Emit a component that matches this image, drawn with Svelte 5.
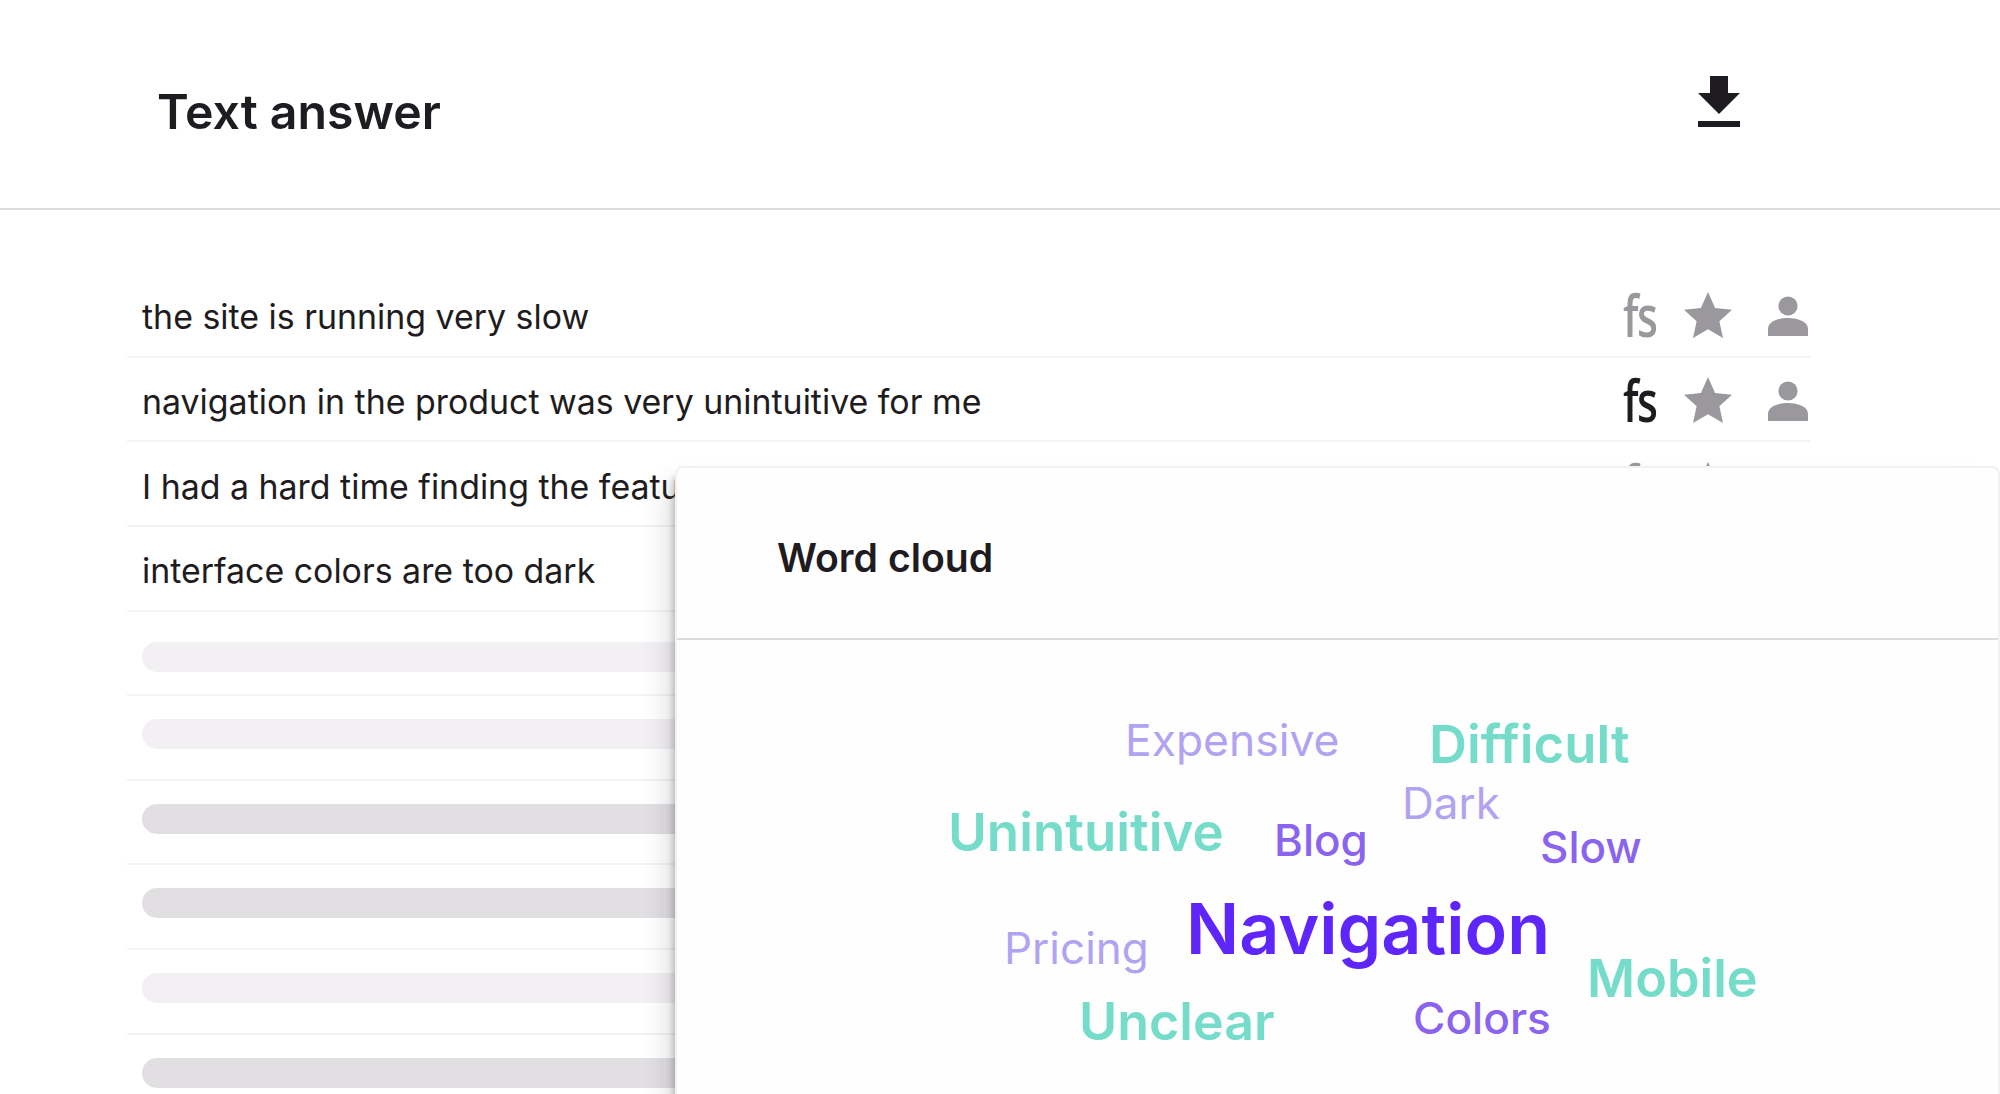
<script>
  const panelX = 675;
  const bodyY = 638;
  const rows = [
    { text: 'the site is running very slow', fs: false },
    { text: 'navigation in the product was very unintuitive for me', fs: true },
    { text: 'I had a hard time finding the features I needed', fs: false },
    { text: 'interface colors are too dark', fs: false }
  ];
  const bars = ['light first', 'light', 'dark', 'dark', 'light', 'dark'];
  const teal = '#75dcc9', pale = '#b1a3f1', mid = '#8a63ee', deep = '#5f26fb';
  const words = [
    { t: 'Expensive', x: 1123, b: 754, s: 44.4, w: 400, c: pale },
    { t: 'Difficult', x: 1427, b: 761, s: 52.6, w: 600, c: teal },
    { t: 'Unintuitive', x: 946, b: 850, s: 52.8, w: 600, c: teal },
    { t: 'Blog', x: 1272, b: 853.5, s: 44, w: 450, c: mid },
    { t: 'Dark', x: 1400, b: 817, s: 44, w: 400, c: pale },
    { t: 'Slow', x: 1538, b: 861, s: 44, w: 450, c: mid },
    { t: 'Navigation', x: 1184, b: 952, s: 70, w: 600, c: deep },
    { t: 'Pricing', x: 1002, b: 962, s: 44, w: 400, c: pale },
    { t: 'Mobile', x: 1585, b: 995, s: 52.2, w: 600, c: teal },
    { t: 'Unclear', x: 1077, b: 1039, s: 52, w: 600, c: teal },
    { t: 'Colors', x: 1411, b: 1032, s: 44.2, w: 450, c: mid }
  ].map((w) => ({ ...w, left: w.x - panelX, top: w.b - bodyY - w.s * 0.8635 }));
</script>

<div class="page">
  <header class="top">
    <h1>Text answer</h1>
    <svg class="download" viewBox="0 0 42 51" width="42" height="51" aria-label="Download">
      <path d="M12 0h18v17h12L21 38 0 17h12z" />
      <rect x="0" y="45" width="42" height="6" />
    </svg>
  </header>

  <section class="list">
    {#each rows as row}
      <div class="row">
        <span class="answer">{row.text}</span>
        <div class="icons">
          <span class="fs" class:on={row.fs}>fs</span>
          <svg class="star" viewBox="0 0 48 46" width="48" height="46">
            <path d="M24 0l7.1 16 16.9 1.8-12.6 11.5L39 46 24 37.3 9 46l3.6-16.7L0 17.8 16.9 16z" />
          </svg>
          <svg class="person" viewBox="0 0 40 40" width="40" height="40">
            <circle cx="20" cy="10" r="9.6" />
            <path d="M0 40v-7c0-7 9-11 20-11s20 4 20 11v7z" />
          </svg>
        </div>
      </div>
    {/each}
    {#each bars as bar}
      <div class="row ghost {bar}"><span class="bar"></span></div>
    {/each}
  </section>

  <aside class="panel">
    <div class="panel-head"><h2>Word cloud</h2></div>
    <div class="cloud">
      {#each words as w}
        <span class="word" style="left:{w.left}px;top:{w.top}px;font-size:{w.s}px;font-weight:{w.w};color:{w.c}">{w.t}</span>
      {/each}
    </div>
  </aside>
</div>

<style>
  :global(body) {
    margin: 0;
    background: #fff;
  }
  .page {
    position: relative;
    width: 2000px;
    height: 1094px;
    overflow: hidden;
    background: #fff;
    font-family: Inter, "Liberation Sans", sans-serif;
    color: #1e1c20;
  }
  .top {
    height: 210px;
    box-sizing: border-box;
    border-bottom: 2px solid #dcdbdd;
    display: flex;
    align-items: center;
    justify-content: space-between;
    padding: 0 258px 0 157px;
  }
  h1 {
    margin: 0;
    font-size: 48.2px;
    font-weight: 600;
    position: relative;
    top: 7px;
  }
  .download {
    fill: #1e1c20;
    margin-top: -5px;
    margin-right: 2px;
  }
  .list {
    margin: 63px 190px 0 127px;
  }
  .row {
    height: 84.625px;
    box-sizing: border-box;
    border-bottom: 2px solid #f3f2f4;
    display: flex;
    align-items: center;
    justify-content: space-between;
    padding: 0 2px 0 15px;
  }
  .answer {
    font-size: 33.9px;
    font-weight: 400;
    white-space: nowrap;
    position: relative;
    top: 2.5px;
  }
  .icons {
    display: flex;
    align-items: center;
    padding-top: 2px;
  }
  .fs {
    width: 36px;
    font-family: "Open Sans", sans-serif;
    font-size: 58px;
    line-height: 44px;
    letter-spacing: -2px;
    color: #9a989c;
    font-weight: 600;
    transform: scaleX(0.74);
    transform-origin: 0 50%;
  }
  .fs.on {
    color: #1e1c20;
    font-weight: 650;
  }
  .star {
    fill: #9a989c;
    margin-left: 25px;
  }
  .person {
    fill: #9a989c;
    margin-left: 36px;
    margin-top: 2px;
  }
  .ghost {
    display: block;
    padding-top: 23px;
  }
  .ghost.first {
    padding-top: 30.5px;
  }
  .bar {
    display: block;
    height: 30px;
    border-radius: 15px;
    background: #e1dfe2;
  }
  .light .bar {
    background: #f2f0f3;
  }
  .panel {
    position: absolute;
    left: 675px;
    top: 466px;
    width: 1325px;
    height: 640px;
    box-sizing: border-box;
    border: 2px solid #f1f0f2;
    border-bottom: 0;
    border-radius: 8px 8px 0 0;
    background: #fefeff;
    box-shadow: -4px 8px 6px -2px rgba(60, 55, 70, 0.28), -14px 12px 24px -6px rgba(60, 55, 70, 0.16);
  }
  .panel-head {
    height: 172px;
    box-sizing: border-box;
    border-bottom: 2px solid #dcdbdd;
    display: flex;
    align-items: center;
    padding-left: 100px;
  }
  h2 {
    margin: 0;
    font-size: 39.2px;
    font-weight: 600;
    position: relative;
    top: 4.5px;
  }
  .cloud {
    position: relative;
  }
  .word {
    position: absolute;
    line-height: 1;
    white-space: nowrap;
  }
</style>
